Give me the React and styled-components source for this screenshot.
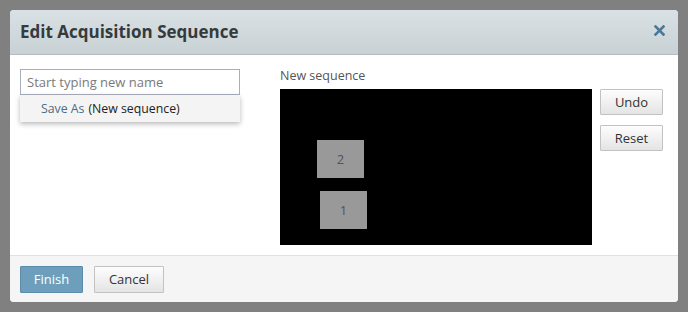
import React from "react";
import styled, { createGlobalStyle } from "styled-components";

const Global = createGlobalStyle`
  html, body { margin: 0; padding: 0; background: #808080; }
  body { font-family: "Open Sans", "Noto Sans", "Liberation Sans", sans-serif; }
  * { box-sizing: border-box; }
`;

const Backdrop = styled.div`
  width: 688px;
  height: 312px;
  padding: 10px;
  background: #808080;
`;

const Dialog = styled.div`
  width: 668px;
  height: 292px;
  background: #fff;
  border-radius: 4px;
  display: flex;
  flex-direction: column;
  overflow: hidden;
`;

const Header = styled.div`
  height: 45px;
  flex: none;
  padding: 0 12px 0 10px;
  display: flex;
  align-items: center;
  justify-content: space-between;
  background: linear-gradient(to bottom, #d9e1e4, #c8d1d4);
  border-bottom: 1px solid #b3bcc0;
`;

const Title = styled.h1`
  margin: 0 0 1px 0;
  font-size: 17px;
  font-weight: 700;
  color: #353a3d;
  letter-spacing: 0;
`;

const Close = styled.button`
  border: none;
  background: none;
  padding: 0;
  width: 14px;
  height: 14px;
  display: flex;
  align-items: center;
  justify-content: center;
  cursor: pointer;
  margin-top: -4px;
`;

const Body = styled.div`
  flex: 1;
  display: flex;
  padding: 14px 10px 0 10px;
  gap: 40px;
`;

const LeftCol = styled.div`
  position: relative;
  width: 220px;
`;

const NameInput = styled.input`
  width: 220px;
  height: 26px;
  border: 1px solid #a9aebd;
  padding: 0 6px;
  font-family: inherit;
  font-size: 13px;
  color: #333;
  outline: none;
  &::placeholder { color: #7a7a7a; }
`;

const Dropdown = styled.div`
  position: absolute;
  top: 26px;
  left: 0;
  width: 220px;
  height: 27px;
  background: #f4f4f4;
  box-shadow: 0 2px 5px rgba(0, 0, 0, 0.28);
  display: flex;
  align-items: center;
  padding-left: 21px;
  font-size: 12.3px;
  color: #222;
`;

const SaveAs = styled.span`
  color: #4d6b86;
  margin-right: 4px;
`;

const RightCol = styled.div`
  display: flex;
  flex-direction: column;
`;

const Label = styled.div`
  font-size: 12.5px;
  color: #555;
  height: 20px;
  line-height: 14px;
`;

const Row = styled.div`
  display: flex;
  gap: 8px;
`;

const Canvas = styled.div`
  position: relative;
  width: 312px;
  height: 156px;
  background: #000;
`;

const Tile = styled.div`
  position: absolute;
  width: 47px;
  height: 38px;
  background: #999;
  color: #4d5560;
  font-size: 13px;
  display: flex;
  align-items: center;
  justify-content: center;
`;

const SideButtons = styled.div`
  display: flex;
  flex-direction: column;
  gap: 10px;
`;

const Button = styled.button`
  height: ${(p) => (p.$tall ? 27 : 26)}px;
  width: ${(p) => p.$w}px;
  padding: 0;
  font-family: inherit;
  font-size: 13px;
  border-radius: 1px;
  cursor: pointer;
  color: ${(p) => (p.$primary ? "#fff" : "#333")};
  background: ${(p) =>
    p.$primary ? "#6d9fbc" : "linear-gradient(to bottom, #fdfdfd, #e4e4e4)"};
  border: 1px solid ${(p) => (p.$primary ? "#5b8cab" : "#c2c2c2")};
`;

const Footer = styled.div`
  height: 47px;
  flex: none;
  background: #f5f5f5;
  border-top: 1px solid #e2e2e2;
  display: flex;
  align-items: center;
  gap: 11px;
  padding: 0 10px;
`;

const tiles = [
  { n: 2, x: 37, y: 51 },
  { n: 1, x: 40, y: 102 },
];

export default function App() {
  return (
    <>
      <Global />
      <Backdrop>
        <Dialog>
          <Header>
            <Title>Edit Acquisition Sequence</Title>
            <Close aria-label="Close">
              <svg width="11" height="11" viewBox="0 0 11 11">
                <path d="M1.5 1.5 L9.5 9.5 M9.5 1.5 L1.5 9.5" stroke="#4a7898" strokeWidth="2.6" strokeLinecap="square" />
              </svg>
            </Close>
          </Header>
          <Body>
            <LeftCol>
              <NameInput placeholder="Start typing new name" />
              <Dropdown>
                <SaveAs>Save As</SaveAs>(New sequence)
              </Dropdown>
            </LeftCol>
            <RightCol>
              <Label>New sequence</Label>
              <Row>
                <Canvas>
                  {tiles.map((t) => (
                    <Tile key={t.n} style={{ left: t.x, top: t.y }}>
                      {t.n}
                    </Tile>
                  ))}
                </Canvas>
                <SideButtons>
                  <Button $w={63}>Undo</Button>
                  <Button $w={63}>Reset</Button>
                </SideButtons>
              </Row>
            </RightCol>
          </Body>
          <Footer>
            <Button $primary $tall $w={63}>Finish</Button>
            <Button $tall $w={70}>Cancel</Button>
          </Footer>
        </Dialog>
      </Backdrop>
    </>
  );
}
